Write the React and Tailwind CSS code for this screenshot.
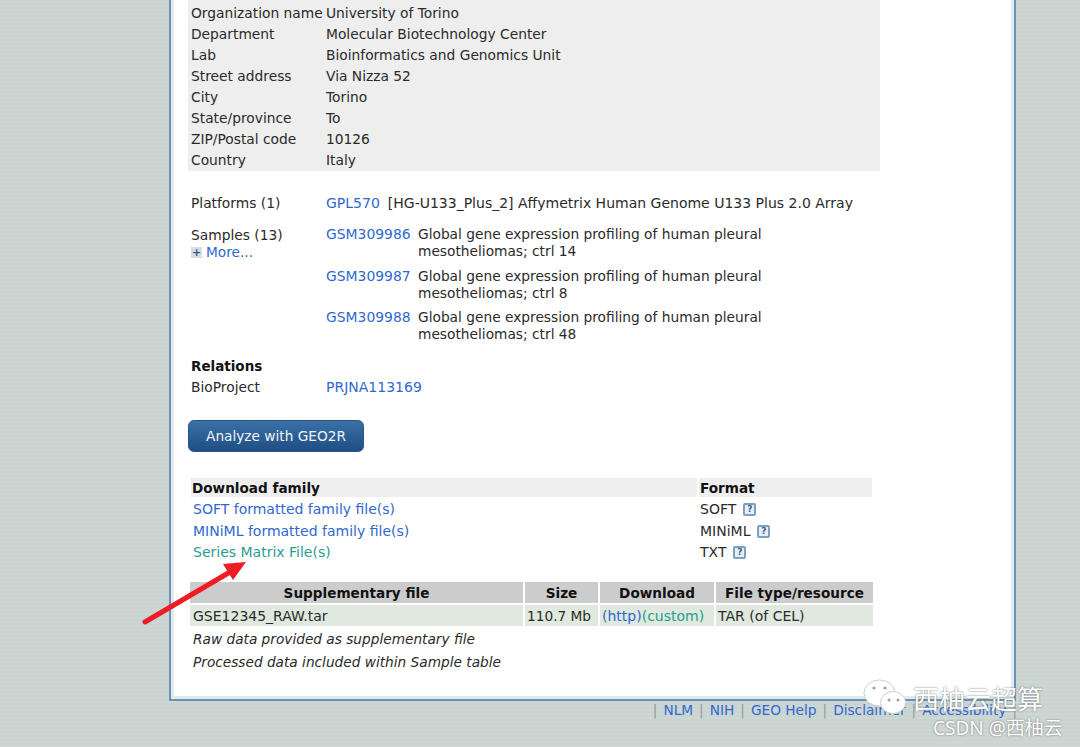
import React from 'react';

const font = { fontFamily: '"DejaVu Sans", Verdana, sans-serif' };

const contact = [
  ['Organization name', 'University of Torino'],
  ['Department', 'Molecular Biotechnology Center'],
  ['Lab', 'Bioinformatics and Genomics Unit'],
  ['Street address', 'Via Nizza 52'],
  ['City', 'Torino'],
  ['State/province', 'To'],
  ['ZIP/Postal code', '10126'],
  ['Country', 'Italy'],
];

const samples = [
  ['GSM309986', 'ctrl 14'],
  ['GSM309987', 'ctrl 8'],
  ['GSM309988', 'ctrl 48'],
];

const Help = () => (
  <span className="inline-flex items-center justify-center w-[13px] h-[13px] ml-[7px] border-2 border-[#7f9fc0] rounded-[2px] bg-[#e8eef5] text-[9px] leading-none font-bold text-[#35608f] align-[2px]">
    ?
  </span>
);

const Arrow = () => (
  <svg className="absolute left-[140px] top-[558px]" width="110" height="70" viewBox="0 0 110 70">
    <path d="M5 64 L90 14" stroke="#ee1c25" strokeWidth="5" strokeLinecap="round" fill="none" />
    <path d="M106 4 L83 6 L93 22 Z" fill="#ee1c25" />
  </svg>
);

const WeChat = () => (
  <svg className="absolute left-[862px] top-[678px]" width="46" height="38" viewBox="0 0 46 38">
    <ellipse cx="17.5" cy="15" rx="15.5" ry="13" fill="#fff" stroke="#c9d2cf" strokeWidth="1" />
    <circle cx="12" cy="10" r="1.6" fill="#9aa3a0" />
    <circle cx="23" cy="10" r="1.6" fill="#9aa3a0" />
    <ellipse cx="31" cy="24.5" rx="12.5" ry="11" fill="#fff" stroke="#c9d2cf" strokeWidth="1" />
    <circle cx="27" cy="22" r="1.5" fill="#9aa3a0" />
    <circle cx="36" cy="22" r="1.5" fill="#9aa3a0" />
  </svg>
);

export default function App() {
  return (
    <div
      className="relative w-[1080px] h-[747px] overflow-hidden bg-[#ccd6d3] bg-[repeating-linear-gradient(0deg,#cdd7d4_0px,#cdd7d4_2px,#c9d3d0_2px,#c9d3d0_4px)] text-[14px] leading-[21px] text-[#2a2a2a]"
      style={font}
    >
      <div className="ml-[169px] w-[847px] h-[701px] border-x-2 border-b-2 border-[#6b8fb5] bg-[#dfeceb] px-[3px] pb-[3px]">
        <div className="h-full bg-white pl-[14px] pr-[135px]">
          <div className="w-[692px] bg-[#eeeeee] pt-[3px] text-[13.8px]">
            {contact.map(([label, value]) => (
              <div key={label} className="flex pl-[3px]">
                <div className="w-[135px] shrink-0">{label}</div>
                <div>{value}</div>
              </div>
            ))}
          </div>

          <div className="flex pl-[3px] mt-[22px]">
            <div className="w-[135px] shrink-0 text-[13.8px]">Platforms (1)</div>
            <div>
              <a className="text-[#3068cf]">GPL570</a>
              <span className="ml-[8px]">[HG-U133_Plus_2] Affymetrix Human Genome U133 Plus 2.0 Array</span>
            </div>
          </div>

          <div className="flex pl-[3px] mt-[11px]">
            <div className="w-[135px] shrink-0">
              <div className="leading-[21px] text-[13.8px]">Samples (13)</div>
              <div className="flex items-center leading-[13px] text-[13.7px]">
                <span className="mr-[4px] flex w-[11px] h-[11px] items-center justify-center bg-[#d5dce4] text-[11px] leading-none font-bold text-[#35587f]">+</span>
                <a className="text-[#3068cf]">More...</a>
              </div>
            </div>
            <div className="flex flex-col gap-[7.5px] leading-[17px] pt-[1px]">
              {samples.map(([id, ctrl]) => (
                <div key={id} className="flex">
                  <a className="w-[92px] shrink-0 text-[#3068cf] text-[13.9px]">{id}</a>
                  <div className="w-[390px] text-[13.75px]">
                    Global gene expression profiling of human pleural mesotheliomas; {ctrl}
                  </div>
                </div>
              ))}
            </div>
          </div>

          <div className="pl-[3px] mt-[13px] font-bold text-[13.5px] text-[#111]">Relations</div>
          <div className="flex pl-[3px]">
            <div className="w-[135px] shrink-0 text-[13.8px]">BioProject</div>
            <a className="text-[#3068cf]">PRJNA113169</a>
          </div>

          <button className="block mt-[22px] h-[32px] w-[176px] rounded-[6px] border border-[#2a5585] bg-gradient-to-b from-[#3a71a8] to-[#1f4e82] text-[13.7px] text-[#f0f4f8]">
            Analyze with GEO2R
          </button>

          <div className="ml-[3px] mt-[26px] w-[681px]">
            <div className="flex gap-[2px] h-[19px] leading-[20px] font-bold text-[13.6px] text-[#111]">
              <div className="w-[506px] bg-[#eeeeee] pl-[1px]">Download family</div>
              <div className="w-[173px] bg-[#eeeeee] pl-[1px]">Format</div>
            </div>
            {[
              ['SOFT formatted family file(s)', 'SOFT', 'text-[#3068cf]'],
              ['MINiML formatted family file(s)', 'MINiML', 'text-[#3068cf]'],
              ['Series Matrix File(s)', 'TXT', 'text-[#2a9d8f]'],
            ].map(([name, format, color]) => (
              <div key={name} className="flex gap-[2px] h-[21.5px] leading-[25px]">
                <a className={`w-[506px] pl-[2px] ${color}`}>{name}</a>
                <div className="w-[173px] pl-[1px]">
                  {format}
                  <Help />
                </div>
              </div>
            ))}
          </div>

          <div className="ml-[2px] mt-[20px] w-[683px]">
            <div className="flex gap-[2px] h-[21px] leading-[22px] font-bold text-[13.6px] text-[#111] text-center">
              <div className="w-[333px] bg-[#cccccc]">Supplementary file</div>
              <div className="w-[73px] bg-[#cccccc]">Size</div>
              <div className="w-[114px] bg-[#cccccc]">Download</div>
              <div className="w-[157px] bg-[#cccccc]">File type/resource</div>
            </div>
            <div className="flex gap-[2px] mt-[2px] h-[21px] leading-[23px]">
              <div className="w-[333px] bg-[#dfe9dd] pl-[3px]">GSE12345_RAW.tar</div>
              <div className="w-[73px] bg-[#dfe9dd] pl-[2px] text-[13.7px]">110.7 Mb</div>
              <div className="w-[114px] bg-[#dfe9dd] pl-[2px]">
                <a className="text-[#3068cf]">(http)</a>
                <a className="text-[#2a9d8f]">(custom)</a>
              </div>
              <div className="w-[157px] bg-[#dfe9dd] pl-[2px]">TAR (of CEL)</div>
            </div>
            <div className="mt-[2px] pl-[3px] italic text-[13.7px] leading-[23px]">Raw data provided as supplementary file</div>
            <div className="pl-[3px] italic text-[13.7px] leading-[23px]">Processed data included within Sample table</div>
          </div>
        </div>
      </div>

      <div className="flex justify-end w-[848px] ml-[169px] text-[13.7px] text-[#999] leading-[18px]">
        {['NLM', 'NIH', 'GEO Help', 'Disclaimer', 'Accessibility'].map((item) => (
          <span key={item} className="flex">
            <span className="mx-[6px]">|</span>
            <a className="text-[#3068cf]">{item}</a>
          </span>
        ))}
        <span className="ml-[6px]">|</span>
      </div>

      <Arrow />
      <WeChat />
      <div
        className="absolute left-[913px] top-[680px] text-[26px] leading-[36px] text-white [text-shadow:0_0_2px_#666]"
        style={{ fontFamily: '"Noto Sans CJK SC", sans-serif' }}
      >
        西柚云超算
      </div>
      <div
        className="absolute left-[933px] top-[715px] text-[19px] leading-[26px] text-white [text-shadow:0_0_2px_#666]"
        style={{ fontFamily: '"Noto Sans", "Noto Sans CJK SC", sans-serif' }}
      >
        CSDN @西柚云
      </div>
    </div>
  );
}
